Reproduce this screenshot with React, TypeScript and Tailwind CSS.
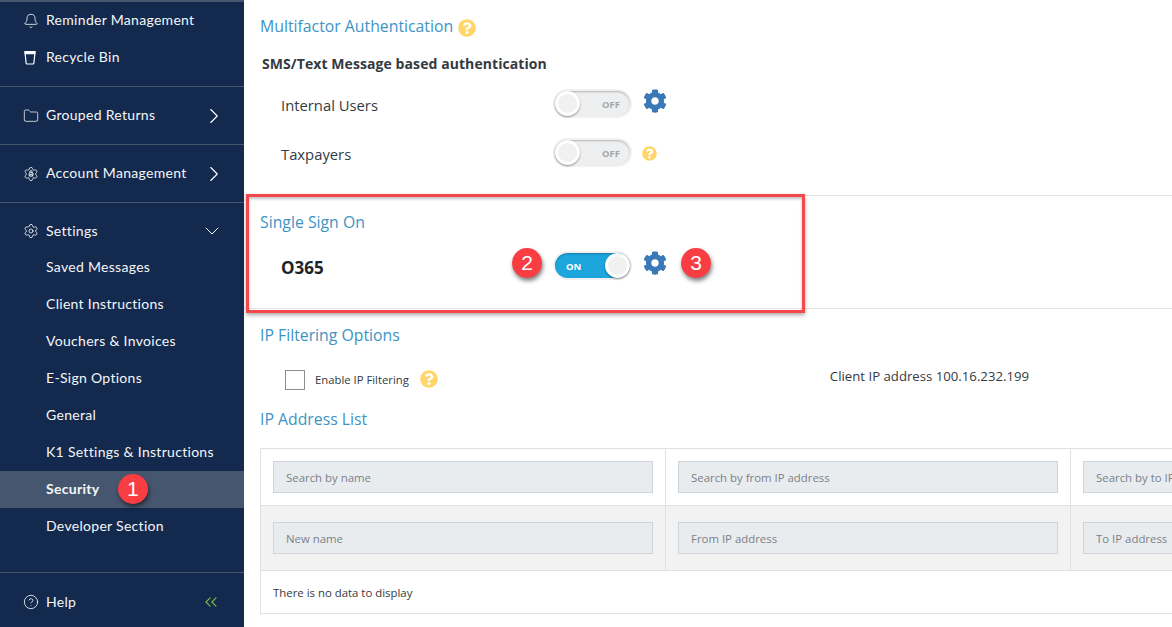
import React from "react";
import { Bell, Folder, Settings, ChevronRight, ChevronDown, ChevronsLeft, CircleHelp } from "lucide-react";
import { FaCog, FaQuestionCircle } from "react-icons/fa";

function Badge({ n, className }: { n: string; className: string }) {
  return (
    <div className={`absolute w-[30px] h-[30px] rounded-full bg-[#f93e43] text-white text-[21px] flex items-center justify-center shadow-[1px_3px_4px_rgba(0,0,0,0.5)] font-['Liberation_Sans',sans-serif] ${className}`}>
      {n}
    </div>
  );
}

function CupIcon() {
  return (
    <svg width="14" height="15" viewBox="0 0 14 15" fill="none" stroke="#fff" strokeWidth="1.2">
      <path d="M2 2 H12 L10.9 13 Q10.8 14 9.8 14 H4.2 Q3.2 14 3.1 13 Z" />
      <path d="M2 1.6 H12 L11.8 3.6 H2.2 Z" fill="#fff" />
    </svg>
  );
}

function AccountIcon() {
  return (
    <span className="relative w-[16px] h-[16px] flex items-center justify-center">
      <Settings size={16} color="#fff" strokeWidth={1.1} />
      <svg className="absolute left-[5px] top-[4px]" width="6" height="8" viewBox="0 0 6 8" fill="#132a4e" stroke="#fff" strokeWidth="0.9">
        <circle cx="3" cy="1.7" r="1.1" />
        <path d="M1 6 Q1.2 4.2 3 4.2 Q4.8 4.2 5 6 Z" />
      </svg>
    </span>
  );
}

function NavRow({ icon, label, right, h = "h-[37px]", active }: { icon?: React.ReactNode; label: string; right?: React.ReactNode; h?: string; active?: boolean }) {
  return (
    <div className={`${h} shrink-0 flex items-center pl-[23px] pr-[24px] ${active ? "bg-[#47566f] font-bold" : ""}`}>
      <span className="w-[23px] shrink-0 flex items-center">{icon}</span>
      <span className="flex-1 whitespace-nowrap pb-[2px]">{label}</span>
      {right}
    </div>
  );
}

function Sidebar() {
  return (
    <aside className="relative w-[244px] shrink-0 h-full overflow-hidden bg-[#132a4e] text-[#f4f6f8] text-[14px] font-['Lato',sans-serif] tracking-[0.3px] flex flex-col">
      <div className="h-[2px] shrink-0 bg-[#47566f]" />
      <NavRow icon={<Bell size={16} color="#fff" strokeWidth={1.2} />} label="Reminder Management" />
      <NavRow icon={<CupIcon />} label="Recycle Bin" />
      <div className="mt-[10px] shrink-0 border-b border-[#47566f]" />
      <NavRow h="h-[57px]" icon={<Folder size={16} color="#fff" strokeWidth={1.1} />} label="Grouped Returns" right={<ChevronRight size={26} color="#fff" strokeWidth={1} className="-mr-[7px]" />} />
      <div className="shrink-0 border-b border-[#47566f]" />
      <NavRow h="h-[57px]" icon={<AccountIcon />} label="Account Management" right={<ChevronRight size={26} color="#fff" strokeWidth={1} className="-mr-[7px]" />} />
      <div className="shrink-0 border-b border-[#47566f]" />
      <div className="h-[10px] shrink-0" />
      <NavRow h="h-[36px]" icon={<Settings size={16} color="#fff" strokeWidth={1.2} />} label="Settings" right={<ChevronDown size={24} color="#fff" strokeWidth={1} className="-mr-[4px]" />} />
      <NavRow label="Saved Messages" />
      <NavRow label="Client Instructions" />
      <NavRow label="Vouchers & Invoices" />
      <NavRow label="E-Sign Options" />
      <NavRow label="General" />
      <NavRow label="K1 Settings & Instructions" />
      <NavRow label="Security" active />
      <NavRow label="Developer Section" />
      <div className="mt-[27px] shrink-0 border-b border-[#47566f]" />
      <NavRow h="h-[55px] pt-[3px]" icon={<CircleHelp size={16} color="#fff" strokeWidth={1.2} />} label="Help" right={<ChevronsLeft size={20} color="#7cc04a" strokeWidth={1.3} className="-mr-[1px]" />} />
      <Badge n="1" className="left-[118px] top-[474px]" />
    </aside>
  );
}

function Toggle({ on }: { on?: boolean }) {
  return (
    <div className="w-[79px] h-[29px] rounded-full bg-[#f1f1f2] p-[2px] shrink-0">
      <div className={`relative w-[75px] h-[25px] rounded-full shadow-[inset_0_1px_2px_rgba(0,0,0,0.25)] ${on ? "bg-[#1da5de]" : "bg-[#eeeff1]"}`}>
        <span className={`absolute top-[7px] text-[9.5px] font-bold font-['Noto_Sans',sans-serif] leading-[13px] ${on ? "left-[11px] text-white" : "right-[10px] text-[#a4a6aa]"}`}>
          {on ? "ON" : "OFF"}
        </span>
        <div className={`absolute top-0 w-[25px] h-[25px] rounded-full bg-[#f1f1f1] border-[3px] border-white shadow-[0_1px_2px_rgba(0,0,0,0.4)] ${on ? "right-0" : "left-0"}`} />
      </div>
    </div>
  );
}

function Heading({ children }: { children: React.ReactNode }) {
  return <h2 className="text-[15.8px] leading-[22px] text-[#3d94c4] whitespace-nowrap">{children}</h2>;
}

function Field({ placeholder }: { placeholder: string }) {
  return (
    <div className="h-[32px] w-[380px] bg-[#e9ecef] border border-[#ced4da] text-[11.4px] text-[#7a8188] flex items-center pl-[12px] pt-[2px] whitespace-nowrap overflow-hidden">
      {placeholder}
    </div>
  );
}

function Cell({ placeholder, h, bg }: { placeholder: string; h: string; bg?: string }) {
  return (
    <div className={`${h} ${bg ?? ""} border-r border-[#dee2e6] pl-[12px] flex items-center`}>
      <Field placeholder={placeholder} />
    </div>
  );
}

function Main() {
  return (
    <main className="relative flex-1 min-w-0 h-full bg-white overflow-hidden font-['Open_Sans',sans-serif] text-[#333a42]">
      <section className="h-[196px] border-b border-[#e4e4e4]">
        <div className="pl-[16px] pt-[15px] flex items-center gap-[5px]">
          <Heading>Multifactor Authentication</Heading>
          <FaQuestionCircle size={18} color="#ffd667" className="mt-[4px]" />
        </div>
        <div className="pl-[18px] mt-[17px] text-[14px] tracking-[0.08px] leading-[20px] font-bold text-[#343a40]">SMS/Text Message based authentication</div>
        <div className="pl-[37px] mt-[15px] h-[29px] flex items-center">
          <span className="w-[272px] text-[14.8px] mt-[3px]">Internal Users</span>
          <Toggle />
          <FaCog size={24} color="#3a78b8" className="ml-[11px] -mt-[5px]" />
        </div>
        <div className="pl-[37px] mt-[20px] h-[29px] flex items-center">
          <span className="w-[272px] text-[14.8px] mt-[3px]">Taxpayers</span>
          <Toggle />
          <FaQuestionCircle size={15} color="#ffd667" className="ml-[10px] mt-[1px]" />
        </div>
      </section>

      <section className="h-[113px] border-b border-[#e4e4e4]">
        <div className="pl-[16px] pt-[15px]"><Heading>Single Sign On</Heading></div>
        <div className="pl-[37px] mt-[18px] h-[29px] flex items-center">
          <span className="w-[272px] text-[17px] font-bold text-[#1f2327] mt-[5px]">O365</span>
          <Toggle on />
          <FaCog size={24} color="#3a78b8" className="ml-[11px] -mt-[5px]" />
        </div>
      </section>

      <section className="pl-[16px]">
        <div className="pt-[15px]"><Heading>IP Filtering Options</Heading></div>
        <div className="flex items-center mt-[24px] h-[20px]">
          <span className="ml-[25px] w-[20px] h-[20px] border border-[#8e8e8e] bg-white shrink-0" />
          <span className="ml-[10px] text-[11.3px] text-[#343a40] whitespace-nowrap">Enable IP Filtering</span>
          <FaQuestionCircle size={18} color="#ffd667" className="ml-[11px] -mt-[3px] shrink-0" />
          <span className="ml-[392px] -mt-[6px] text-[13.2px] text-[#343a40] whitespace-nowrap">Client IP address 100.16.232.199</span>
        </div>
        <div className="mt-[18px]"><Heading>IP Address List</Heading></div>
        <div className="mt-[18px] w-[1000px] h-[166px] border border-[#dee2e6] border-r-0 text-[#343a40]">
          <div className="grid grid-cols-[405px_405px_405px] border-b border-[#dee2e6]">
            <Cell h="h-[56px]" placeholder="Search by name" />
            <Cell h="h-[56px]" placeholder="Search by from IP address" />
            <Cell h="h-[56px]" placeholder="Search by to IP address" />
          </div>
          <div className="grid grid-cols-[405px_405px_405px] border-b border-[#dee2e6]">
            <Cell h="h-[64px]" bg="bg-[#f2f2f2]" placeholder="New name" />
            <Cell h="h-[64px]" bg="bg-[#f2f2f2]" placeholder="From IP address" />
            <Cell h="h-[64px]" bg="bg-[#f2f2f2]" placeholder="To IP address" />
          </div>
          <div className="h-[42px] pl-[12px] pt-[2px] flex items-center text-[11.4px]">There is no data to display</div>
        </div>
      </section>

      <div className="absolute left-[2px] top-[194px] w-[559px] h-[119px] border-[3px] border-[#f4484c] shadow-[0_2px_4px_rgba(0,0,0,0.35),inset_0_2px_3px_rgba(0,0,0,0.25)]" />
      <Badge n="2" className="left-[268px] top-[248px]" />
      <Badge n="3" className="left-[437px] top-[248px]" />
    </main>
  );
}

export default function App() {
  return (
    <div className="flex w-[1172px] h-[627px] overflow-hidden">
      <Sidebar />
      <Main />
    </div>
  );
}
